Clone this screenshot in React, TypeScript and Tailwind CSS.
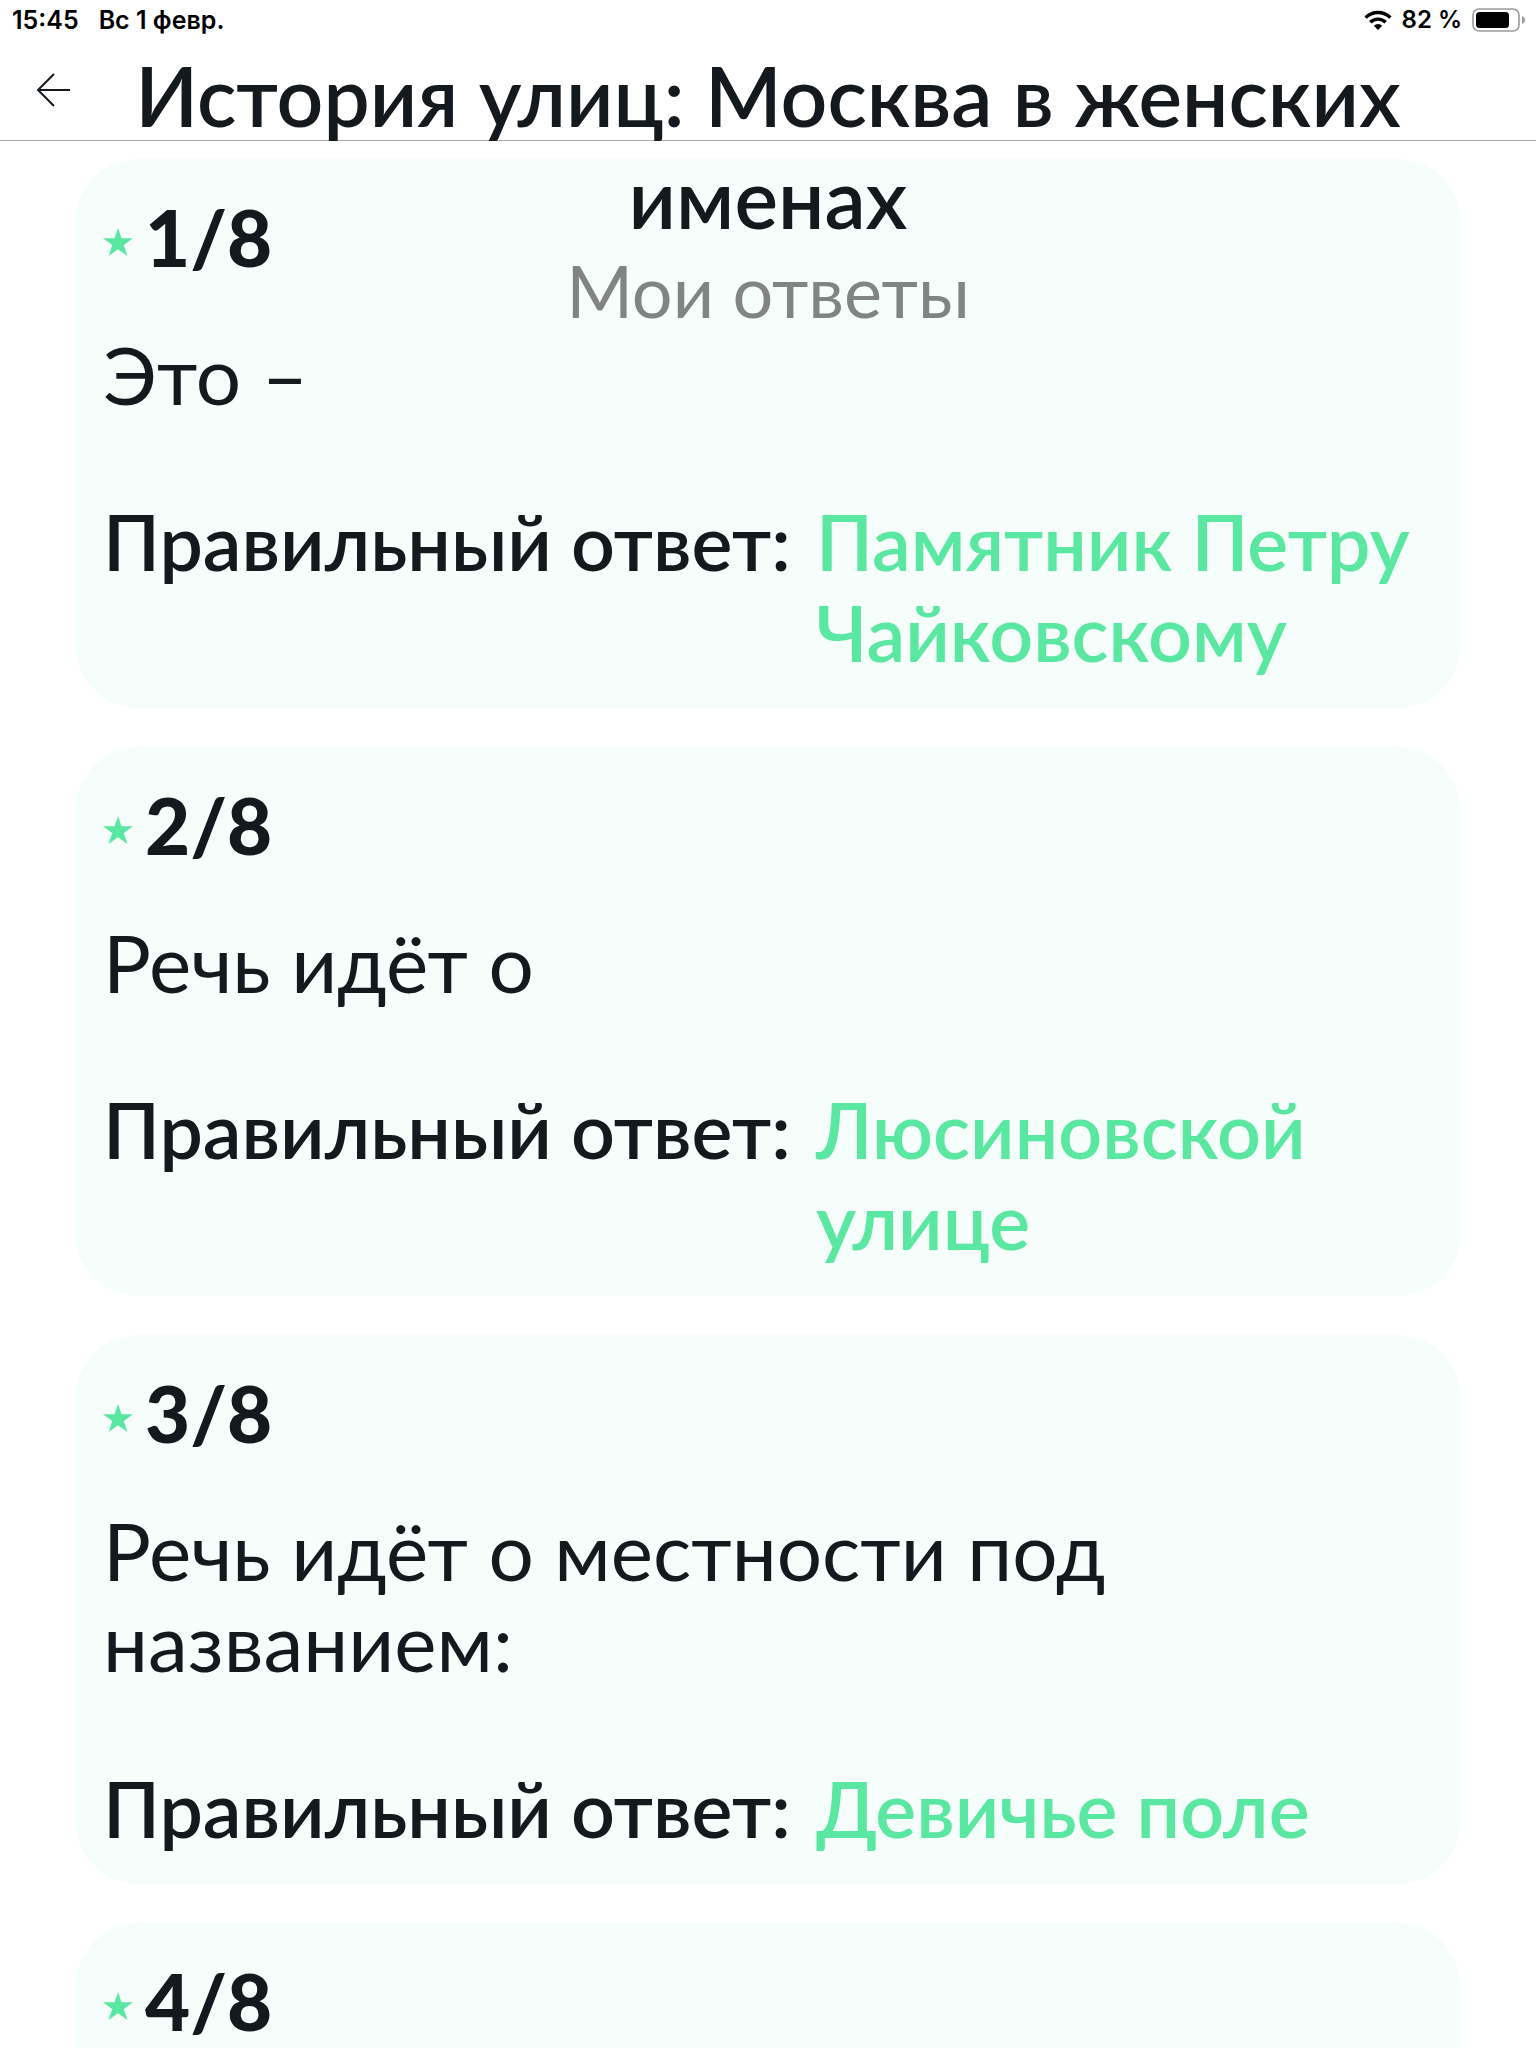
import React from 'react';

type Answer = {
    question?: string;
    answer?: string;
};

const TOTAL = 8;

const answers: Answer[] = [
    { question: 'Это –', answer: 'Памятник Петру Чайковскому' },
    { question: 'Речь идёт о', answer: 'Люсиновской улице' },
    { question: 'Речь идёт о местности под названием:', answer: 'Девичье поле' },
    {}
];

function StatusBar() {
    return (
        <div className="flex h-10 items-center justify-between pl-3 pr-2.5 font-['Inter',sans-serif] text-[25px] leading-[40px] font-semibold text-black">
            <div className="flex gap-5">
                <span>15:45</span>
                <span>Вс 1 февр.</span>
            </div>
            <div className="flex items-center gap-2.5 text-[24px]">
                <svg width="28" height="20" viewBox="0 0 28 20" fill="none" stroke="#000" strokeWidth="3.4">
                    <path d="M1.6 7.6a17.6 17.6 0 0 1 24.8 0" />
                    <path d="M6.3 12.3a11 11 0 0 1 15.4 0" />
                    <path d="M14 20l-4.2-4.2a6 6 0 0 1 8.4 0z" fill="#000" stroke="none" />
                </svg>
                <span>82 %</span>
                <svg width="54" height="24" viewBox="0 0 54 24">
                    <rect x="1" y="1" width="46" height="22" rx="6" fill="none" stroke="#9a9a9a" strokeWidth="1.6" />
                    <rect x="4" y="4" width="33" height="16" rx="3.5" fill="#000" />
                    <path d="M50 8c4 1.5 4 6.500 0 8z" fill="#9a9a9a" />
                </svg>
            </div>
        </div>
    );
}

function AnswerCard({ index, item }: { index: number; item: Answer }) {
    return (
        <li className="min-h-[549px] rounded-[64px] bg-[#f6fefb] px-7 pt-[33px] pb-[30px] text-[80px] leading-[91px]">
            <div className="flex items-center gap-3">
                <svg width="30" height="28" viewBox="0 0 30 28" className="mt-2 shrink-0" fill="#5ae7a1">
                    <path d="M15 0l3.500 10.300H30l-9.200 6.700L24.500 28 15 21.200 5.500 28l3.700-11L0 10.300h11.500z" />
                </svg>
                <h2 className="text-[78px] font-black">{index}/{TOTAL}</h2>
            </div>
            {item.question && <p className="mt-[46px]">{item.question}</p>}
            {item.answer && (
                <div className="mt-[76px] flex text-[77px] font-semibold">
                    <span className="w-[713px] shrink-0">Правильный ответ:</span>
                    <span className="text-[#5ae7a1]">{item.answer}</span>
                </div>
            )}
        </li>
    );
}

export default function App() {
    return (
        <div className="h-screen overflow-hidden bg-white font-['Lato',sans-serif] text-[#14191d]">
            <StatusBar />
            <header className="relative z-10 flex h-[101px] border-b border-[#a8a8a8] px-9">
                <button type="button" aria-label="Назад" className="mt-[33px] h-[34px] w-[34px] shrink-0">
                    <svg width="34" height="34" viewBox="0 0 34 34" fill="none" stroke="#14191d" strokeWidth="2">
                        <path d="M34 17H2M18 1L2 17l16 16" />
                    </svg>
                </button>
                {/* the title does not fit the bar and hangs over the list */}
                <div className="flex-1 pt-1 pr-[34px] text-center">
                    <h1 className="text-[82px] leading-[102px] font-semibold">История улиц: Москва в женских именах</h1>
                    <p className="text-[72px] leading-[84px] text-[#808482]">Мои ответы</p>
                </div>
            </header>
            <ul className="flex flex-col gap-[39px] px-[75px] pt-[18px]">
                {answers.map((item, i) => (
                    <AnswerCard key={i} index={i + 1} item={item} />
                ))}
            </ul>
        </div>
    );
}
